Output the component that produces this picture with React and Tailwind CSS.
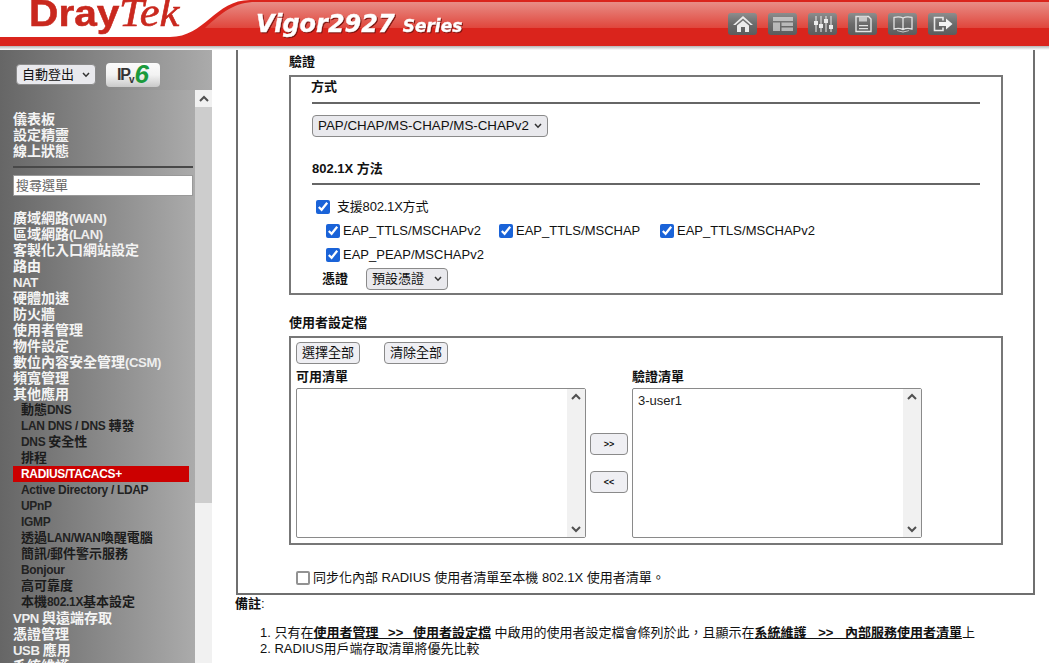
import React from "react";

const font = { fontFamily: '"Liberation Sans", "Noto Sans CJK TC", sans-serif' };

const topMenu = ["廣域網路(WAN)", "區域網路(LAN)", "客製化入口網站設定", "路由", "NAT", "硬體加速", "防火牆", "使用者管理", "物件設定", "數位內容安全管理(CSM)", "頻寬管理", "其他應用"];
const subMenu = ["動態DNS", "LAN DNS / DNS 轉發", "DNS 安全性", "排程", "RADIUS/TACACS+", "Active Directory / LDAP", "UPnP", "IGMP", "透過LAN/WAN喚醒電腦", "簡訊/郵件警示服務", "Bonjour", "高可靠度", "本機802.1X基本設定"];
const bottomMenu = ["VPN 與遠端存取", "憑證管理", "USB 應用", "系統維護"];

// latin runs are a bit tighter than the CJK ones in the menu
const Mixed = ({ text, latin }) =>
  text.split(/([\x00-\x7f]+)/).map((part, i) =>
    /[\x00-\x7f]/.test(part)
      ? <span key={i} className={latin}>{part}</span>
      : <span key={i}>{part}</span>
  );

const Tile = ({ children }) => (
  <div className="w-[29px] h-[22px] rounded-[3px] bg-gradient-to-b from-[#8d8d8d] via-[#6b6b6b] to-[#5c5c5c] flex items-center justify-center">
    <svg width="22" height="18" viewBox="0 0 22 18" fill="#ececec" stroke="none">{children}</svg>
  </div>
);

const Chevron = ({ up }) => (
  <svg width="10" height="7" viewBox="0 0 10 7" fill="none" stroke="#505050" strokeWidth="2">
    <path d={up ? "M1 6 L5 2 L9 6" : "M1 1 L5 5 L9 1"} />
  </svg>
);

const ListBox = ({ width, children }) => (
  <div className={`${width} h-[150px] border border-[#8a8a8a] rounded-[2px] flex bg-white`}>
    <div className="flex-1 px-[5px] pt-[4px] text-[13px] leading-[16px] text-[#222]">{children}</div>
    <div className="w-[18px] bg-[#f1f1f1] flex flex-col justify-between items-center py-[4px]">
      <Chevron up />
      <Chevron />
    </div>
  </div>
);

const Check = () => (
  <input type="checkbox" defaultChecked className="w-[14px] h-[14px] m-0 accent-[#1a63d8]" />
);

const NativeSelect = ({ className, label, textClass }) => (
  <div className={`relative ${className}`}>
    <select className={`block appearance-none w-full h-full border border-[#8a8a8a] rounded-[4px] bg-[#e9e9ed] text-[#111] pl-[5px] ${textClass}`}>
      <option>{label}</option>
    </select>
    <svg className="absolute right-[6px] top-1/2 -mt-[3px] pointer-events-none" width="8" height="6" viewBox="0 0 8 6" fill="none" stroke="#333" strokeWidth="1.5">
      <path d="M1 1 L4 4.2 L7 1" />
    </svg>
  </div>
);

const Method = ({ label, width }) => (
  <label className={`flex items-center ${width}`}>
    <Check />
    <span className="ml-[3px]">{label}</span>
  </label>
);

const Sidebar = () => (
  <div className="w-[212px] shrink-0 h-full flex flex-col">
    {/* logout + ipv6 */}
    <div className="h-[40px] shrink-0 bg-gradient-to-r from-[#666666] to-[#ababab] flex items-start pt-[13px] pl-[16px]">
      <NativeSelect className="mt-px w-[80px] h-[21px]" textClass="text-[13px]" label="自動登出" />
      <div className="ml-[10px] w-[54px] h-[24px] rounded-[4px] bg-gradient-to-b from-[#fbfbfb] via-[#f2f2f2] to-[#c9c9c9] flex items-center justify-center">
        <span className="text-[16px] font-bold text-[#333] leading-none tracking-[-1px]">IP</span>
        <span className="text-[10px] font-bold text-[#333] leading-none mt-[9px] -ml-[1px]">v</span>
        <span className="text-[26px] italic font-bold text-[#1a9a3c] leading-none -mt-[2px]">6</span>
      </div>
    </div>
    <div className="flex-1 flex min-h-0">
      <div className="w-[195px] bg-gradient-to-r from-[#666666] to-[#ababab] overflow-hidden pl-[13px] pt-[21px] font-bold text-[14px] leading-[16px] text-[#f4f4f4]">
        <div className="h-4">儀表板</div>
        <div className="h-4">設定精靈</div>
        <div className="h-4">線上狀態</div>
        <div className="mt-[7px] h-[2px] w-[180px] bg-[#484848]"></div>
        <div className="mt-[7px] w-[180px] h-[21px] bg-white border border-[#999] px-[2px] text-[13px] font-normal leading-[19px] text-[#666]">搜尋選單</div>
        <div className="mt-[14px]">
          {topMenu.map((m) => <div key={m} className="h-4 whitespace-nowrap"><Mixed text={m} latin="text-[0.94em] tracking-[-0.4px] text-[#eeeeee]" /></div>)}
        </div>
        <div className="text-[13px] text-[#1c1c1c]">
          {subMenu.map((m) => (
            m === "RADIUS/TACACS+"
              ? <div key={m} className="h-4 w-[176px] pl-[8px] bg-[#cc0000] text-white"><Mixed text={m} latin="text-[0.92em] tracking-[-0.3px]" /></div>
              : <div key={m} className="h-4 pl-[8px] whitespace-nowrap"><Mixed text={m} latin="text-[0.92em] tracking-[-0.3px] text-[#222222]" /></div>
          ))}
        </div>
        <div>
          {bottomMenu.map((m) => <div key={m} className="h-4 whitespace-nowrap"><Mixed text={m} latin="text-[0.94em] tracking-[-0.4px] text-[#eeeeee]" /></div>)}
        </div>
      </div>
      {/* sidebar scrollbar */}
      <div className="w-[17px] bg-[#f1f1f1] flex flex-col">
        <div className="h-[17px] flex items-center justify-center"><Chevron up /></div>
        <div className="h-[396px] bg-[#cdcdcd]"></div>
      </div>
    </div>
  </div>
);

const Main = () => (
  <div className="flex-1 min-w-0 text-[13px] leading-[16px] text-[#111]">
    <div className="ml-[24px] w-[799px] h-[545px] border-2 border-t-0 border-[#6f6f6f] pl-[51px] pt-[4px]">
      <div className="font-bold h-4">驗證</div>
      <div className="mt-[5px] w-[714px] h-[220px] border-2 border-[#777777] pl-[21px] pt-[2px]">
        <div className="font-bold h-4 -ml-px">方式</div>
        <div className="mt-[7px] w-[668px] h-[2px] bg-[#666]"></div>
        <NativeSelect className="mt-[11px] w-[236px] h-[22px]" textClass="text-[13.33px]" label="PAP/CHAP/MS-CHAP/MS-CHAPv2" />
        <div className="font-bold h-4 mt-[24px]">802.1X 方法</div>
        <div className="mt-[6px] w-[668px] h-[2px] bg-[#666]"></div>
        <label className="flex items-center h-4 mt-[14px] ml-[4px]">
          <Check />
          <span className="ml-[7px] tracking-[-0.2px]">支援802.1X方式</span>
        </label>
        <div className="flex h-4 mt-[8px] ml-[14px]">
          <Method label="EAP_TTLS/MSCHAPv2" width="w-[173px]" />
          <Method label="EAP_TTLS/MSCHAP" width="w-[161px]" />
          <Method label="EAP_TTLS/MSCHAPv2" width="w-[173px]" />
        </div>
        <div className="flex h-4 mt-[8px] ml-[14px]">
          <Method label="EAP_PEAP/MSCHAPv2" width="w-[173px]" />
        </div>
        <div className="flex items-center mt-[5px] ml-[10px]">
          <span className="font-bold w-[44px]">憑證</span>
          <NativeSelect className="w-[82px] h-[22px]" textClass="text-[13px]" label="預設憑證" />
        </div>
      </div>

      <div className="font-bold h-4 mt-[20px]">使用者設定檔</div>
      <div className="mt-[5px] w-[714px] h-[209px] border-2 border-[#777777] pl-[5px] pt-[4px]">
        <div className="flex gap-[24px]">
          <button className="w-[64px] h-[22px] border border-[#8a8a8a] rounded-[4px] bg-[#efeff3]">選擇全部</button>
          <button className="w-[64px] h-[22px] border border-[#8a8a8a] rounded-[4px] bg-[#efeff3]">清除全部</button>
        </div>
        <div className="flex font-bold h-4 mt-[5px]">
          <div className="w-[336px]">可用清單</div>
          <div>驗證清單</div>
        </div>
        <div className="flex mt-[3px]">
          <ListBox width="w-[290px]" />
          <div className="w-[46px] flex flex-col items-center pt-[45px] gap-[16px]">
            <button className="w-[38px] h-[22px] border border-[#8a8a8a] rounded-[4px] bg-[#efeff3] text-[9px] font-bold leading-none">&gt;&gt;</button>
            <button className="w-[38px] h-[22px] border border-[#8a8a8a] rounded-[4px] bg-[#efeff3] text-[9px] font-bold leading-none">&lt;&lt;</button>
          </div>
          <ListBox width="w-[290px]">3-user1</ListBox>
        </div>
      </div>
      <label className="flex items-center h-4 mt-[25px] ml-[7px]">
        <input type="checkbox" className="appearance-none w-[14px] h-[14px] m-0 border-2 border-[#929292] rounded-[2px] bg-white" />
        <span className="ml-[3px]">同步化內部 RADIUS 使用者清單至本機 802.1X 使用者清單。</span>
      </label>
    </div>
    <div className="ml-[23px] mt-[1px] h-4"><b>備註</b>:</div>
    <div className="ml-[48px] mt-[13px] whitespace-nowrap">
      <div className="h-4">1. 只有在<b className="underline [word-spacing:6px]">使用者管理 &gt;&gt; 使用者設定檔</b> 中啟用的使用者設定檔會條列於此，且顯示在<b className="underline [word-spacing:8px]">系統維護 &gt;&gt; 內部服務使用者清單</b>上</div>
      <div className="h-4">2. RADIUS用戶端存取清單將優先比較</div>
    </div>
  </div>
);

const App = () => {
  return (
    <div style={font} className="w-[1049px] h-[663px] overflow-hidden bg-white flex flex-col">
      {/* header */}
      <div className="relative h-[50px] shrink-0 overflow-hidden">
        <svg className="absolute inset-0" width="1049" height="50" viewBox="0 0 1049 50">
          <defs>
            <linearGradient id="gloss" x1="0" y1="0" x2="0" y2="1">
              <stop offset="0" stopColor="#e88d86" />
              <stop offset="1" stopColor="#e0463c" />
            </linearGradient>
            <linearGradient id="shade" x1="0" y1="0" x2="0" y2="1">
              <stop offset="0" stopColor="#b5b5b5" />
              <stop offset="1" stopColor="#ffffff" />
            </linearGradient>
          </defs>
          <rect x="0" y="46" width="1049" height="4" fill="url(#shade)" />
          <path d="M0 37 L170 37 C205 37 215 0 250 0 L1049 0 L1049 46 L0 46 Z" fill="#da241c" />
          <path d="M205 28 C222 12 235 2 256 2 L1049 2 L1049 28 Z" fill="url(#gloss)" />
        </svg>
        <div className="relative flex items-start">
          <div className="w-[256px] pl-[29px] -mt-[7px] whitespace-nowrap text-[#c9281e] leading-none">
            <span className="inline-block w-[90px] origin-left scale-x-[1.1] text-[37px] font-bold [-webkit-text-stroke:0.5px_#c9281e]">Dray</span>
            <span className="inline-block origin-left scale-x-[1.14] text-[39px] italic [-webkit-text-stroke:0.6px_#c9281e]" style={{ fontFamily: '"Liberation Serif", serif' }}>Tek</span>
          </div>
          <div className="mt-[12px] whitespace-nowrap text-white font-bold italic leading-none drop-shadow-[1px_1px_0_#7a1510] [-webkit-text-stroke:0.4px_#ffffff]" style={{ fontFamily: '"DejaVu Sans", sans-serif' }}>
            <span className="text-[24px]">Vigor2927</span>
            <span className="text-[17px] ml-[8px]">Series</span>
          </div>
          <div className="ml-auto mr-[92px] mt-[13px] flex gap-[11px]">
            <Tile><path d="M11 1 L21 10 L18.5 10 L11 3.6 L3.5 10 L1 10 Z M5 10.5 L11 5.4 L17 10.5 L17 17 L13 17 L13 12 L9 12 L9 17 L5 17 Z" /></Tile>
            <Tile><path d="M1 2 H21 V6 H1 Z M1 7.5 H8 V16 H1 Z M9.5 7.5 H21 V11 H9.5 Z M9.5 12.5 H21 V16 H9.5 Z" opacity="0.6" /></Tile>
            <Tile><path d="M3.5 1 h1 v5 h-1 z M3.5 10 h1 v7 h-1 z M2 6 h4 v4 h-4 z M8.5 1 h1 v8 h-1 z M8.5 13 h1 v4 h-1 z M7 9 h4 v4 h-4 z M13.5 1 h1 v3 h-1 z M13.5 8 h1 v9 h-1 z M12 4 h4 v4 h-4 z M18.5 1 h1 v9 h-1 z M18.5 14 h1 v3 h-1 z M17 10 h4 v4 h-4 z" /></Tile>
            <Tile>
              <path d="M4 1.5 H16.5 L19 4 V16.5 H4 Z" fill="none" stroke="#e4e4e4" strokeWidth="1.4" />
              <path d="M7 1.5 H15 V6.5 H7 Z" fill="#c8c8c8" />
              <path d="M7 10 H16 V11.2 H7 Z M7 13 H16 V14.2 H7 Z" fill="#e4e4e4" />
            </Tile>
            <Tile>
              <path d="M11 3 C8.5 1.6 5 1.6 2 2.4 V14 C5 13.2 8.5 13.2 11 14.6 C13.5 13.2 17 13.2 20 14 V2.4 C17 1.6 13.5 1.6 11 3 Z M11 3 V14.6" fill="none" stroke="#e4e4e4" strokeWidth="1.3" />
              <path d="M5 16 L11 17.6 L17 16 V15.2 L11 16.4 L5 15.2 Z" fill="#d0d0d0" />
            </Tile>
            <Tile>
              <path d="M11 5.5 V2.5 H2.5 V15.5 H11 V12.5" fill="none" stroke="#e8e8e8" strokeWidth="1.6" />
              <path d="M7 7 H14 V3.5 L20.5 9 L14 14.5 V11 H7 Z" fill="#f2f2f2" />
            </Tile>
          </div>
        </div>
      </div>
      <div className="flex-1 flex min-h-0">
        <Sidebar />
        <Main />
      </div>
    </div>
  );
};

export default App;
